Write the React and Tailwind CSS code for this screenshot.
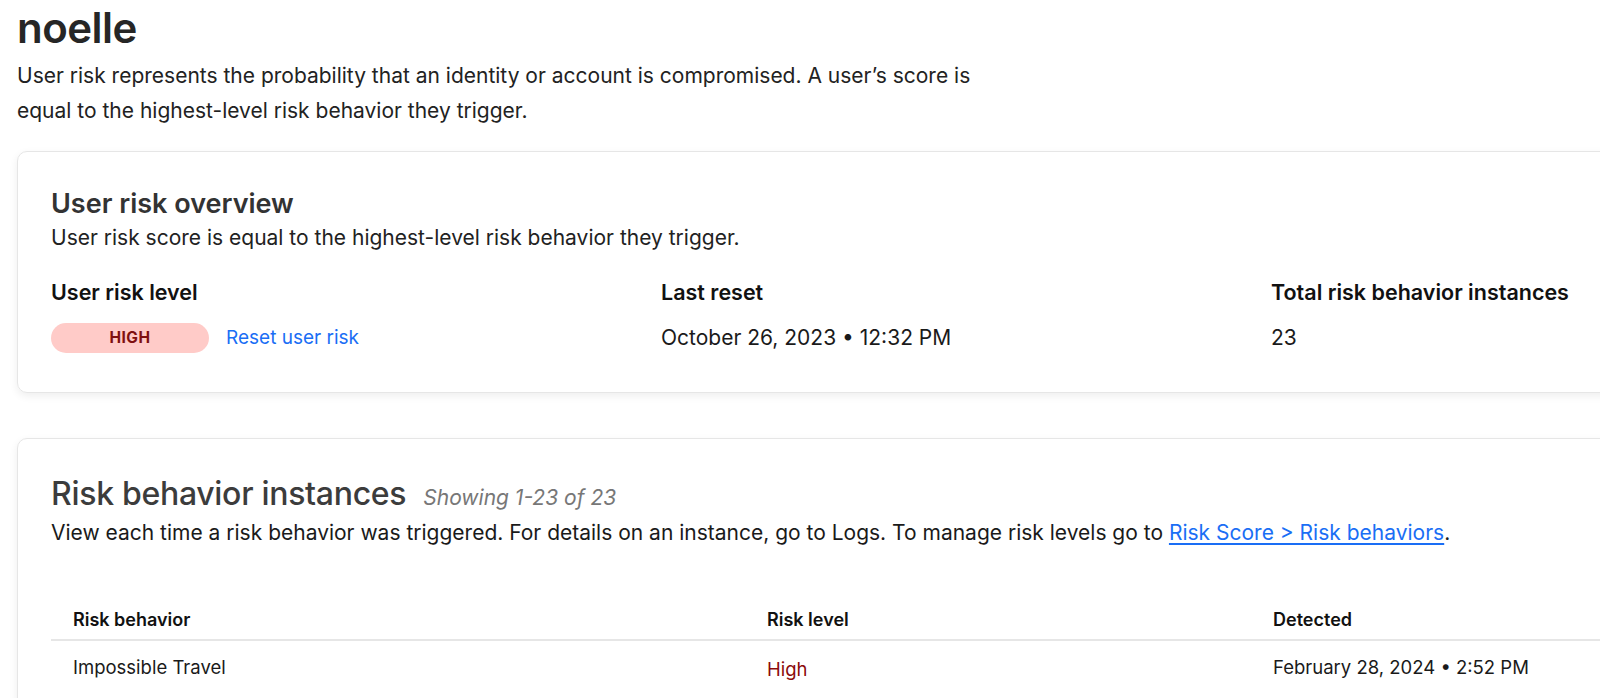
export default function App() {
  return (
    <div
      className="w-[1600px] h-[698px] overflow-hidden bg-white text-[#1f1f1f]"
      style={{ fontFamily: 'Inter, "Noto Sans", sans-serif' }}
    >
      <div className="pl-[17px] pt-[2px]">
        <h1 className="text-[42px] font-semibold leading-[52px] text-[#262626] tracking-[-0.5px]">noelle</h1>
        <p className="mt-[5px] max-w-[965px] text-[21px] leading-[34.5px] text-[#222]">
          User risk represents the probability that an identity or account is compromised. A user’s score is equal to
          the highest-level risk behavior they trigger.
        </p>

        <div className="mt-[23px] w-[1700px] rounded-[10px] border border-[#e6e6e6] shadow-[0_3px_8px_rgba(0,0,0,0.07)] pl-[33px] pt-[34px] pb-[39px]">
          <h2 className="text-[27px] font-semibold leading-[36px] text-[#333]">User risk overview</h2>
          <p className="mt-[1px] text-[21px] leading-[30px] text-[#222]">
            User risk score is equal to the highest-level risk behavior they trigger.
          </p>
          <div className="mt-[25px] grid grid-cols-[610px_610px_1fr]">
            <div>
              <div className="text-[21.5px] font-semibold leading-[28px] text-[#111]">User risk level</div>
              <div className="mt-[17px] flex items-center gap-[17px]">
                <span className="flex h-[30px] w-[158px] items-center justify-center rounded-full bg-[#ffcbc8] text-[15.5px] font-bold tracking-[0.5px] text-[#7f1010]">
                  HIGH
                </span>
                <a className="text-[19px] text-[#1a6ef5]">Reset user risk</a>
              </div>
            </div>
            <div>
              <div className="text-[21.5px] font-semibold leading-[28px] text-[#111]">Last reset</div>
              <div className="mt-[17px] flex h-[30px] items-center text-[21px] text-[#1a1a1a]">
                October 26, 2023 • 12:32 PM
              </div>
            </div>
            <div>
              <div className="text-[21.5px] font-semibold leading-[28px] text-[#111]">Total risk behavior instances</div>
              <div className="mt-[17px] flex h-[30px] items-center text-[21px] text-[#1a1a1a]">23</div>
            </div>
          </div>
        </div>

        <div className="mt-[45px] w-[1700px] rounded-[10px] border border-[#e6e6e6] shadow-[0_3px_8px_rgba(0,0,0,0.07)] pl-[33px] pt-[35px] pb-[80px]">
          <div className="flex items-baseline gap-[17px]">
            <h2 className="text-[32px] font-medium leading-[40px] text-[#3c3c3c] tracking-[-0.3px]">
              Risk behavior instances
            </h2>
            <span className="text-[21px] italic text-[#777]">Showing 1-23 of 23</span>
          </div>
          <p className="mt-[3px] text-[21px] leading-[32px] text-[#1a1a1a]">
            View each time a risk behavior was triggered. For details on an instance, go to Logs. To manage risk levels
            go to{' '}
            <a className="text-[#1a6ef5] underline underline-offset-[3px]">Risk Score &gt; Risk behaviors</a>.
          </p>

          <div className="mt-[59px] w-[1580px]">
            <div className="grid grid-cols-[694px_506px_1fr] border-b-2 border-[#e6e6e6] pb-[7px] pl-[22px] text-[18px] font-semibold leading-[24px] text-[#111]">
              <div>Risk behavior</div>
              <div>Risk level</div>
              <div>Detected</div>
            </div>
            <div className="grid h-[59px] grid-cols-[694px_506px_1fr] items-center border-b-2 border-[#dcdcdc] pb-[3px] pl-[22px] text-[18.5px] text-[#1a1a1a]">
              <div>Impossible Travel</div>
              <div className="pt-[4px] text-[#8b0a0a]">High</div>
              <div>February 28, 2024 • 2:52 PM</div>
            </div>
          </div>
        </div>
      </div>
    </div>
  )
}
